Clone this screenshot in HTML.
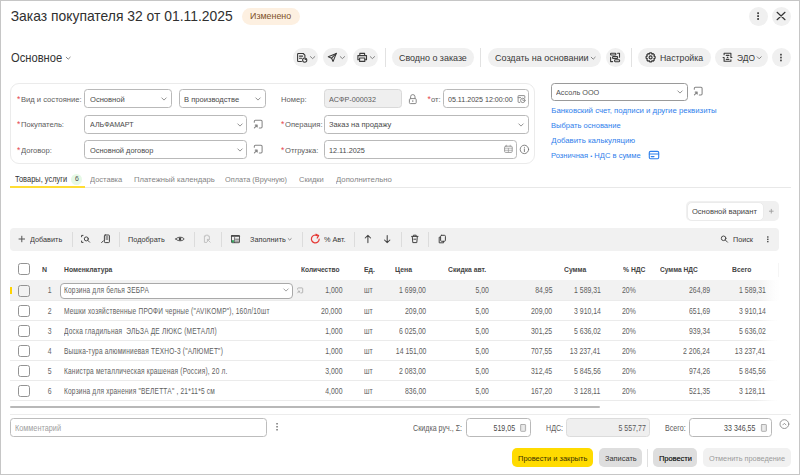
<!DOCTYPE html>
<html><head><meta charset="utf-8"><style>
html,body{margin:0;padding:0;width:800px;height:475px;overflow:hidden;background:#fff;}
body{position:relative;font-family:"Liberation Sans",sans-serif;}
.t{position:absolute;white-space:nowrap;line-height:20px;}
svg{overflow:visible;}
</style></head><body>
<div style="position:absolute;left:0px;top:0px;width:800px;height:475px;box-sizing:border-box;border:1px solid #c6c6c6;"></div>
<div class="t" style="left:10.7px;top:6px;font-size:13.9px;color:#303030;font-weight:400;">Заказ покупателя 32 от 01.11.2025</div>
<div style="position:absolute;left:242px;top:8px;width:58px;height:17px;box-sizing:border-box;background:#fdf0e1;border-radius:8.5px;"></div>
<div class="t" style="left:249.6px;top:6px;font-size:9.3px;color:#7d5128;font-weight:400;transform:scaleX(0.955);transform-origin:left center;">Изменено</div>
<div style="position:absolute;left:749px;top:7px;width:19px;height:19px;box-sizing:border-box;background:#f0f0f0;border-radius:10px;"></div>
<div style="position:absolute;left:772px;top:7px;width:19px;height:19px;box-sizing:border-box;background:#f0f0f0;border-radius:10px;"></div>
<svg style="position:absolute;left:749px;top:6px" width="18" height="20" viewBox="749 6 18 20" fill="none" stroke="#444" stroke-width="1" stroke-linecap="round" stroke-linejoin="round"><rect x="757.2" y="12.3" width="1.8" height="1.8" fill="#444" stroke="none"/><rect x="757.2" y="15.2" width="1.8" height="1.8" fill="#444" stroke="none"/><rect x="757.2" y="18.1" width="1.8" height="1.8" fill="#444" stroke="none"/></svg>
<svg style="position:absolute;left:771px;top:6px" width="20" height="20" viewBox="771 6 20 20" fill="none" stroke="#333" stroke-width="1.2" stroke-linecap="round" stroke-linejoin="round"><path d="M777.1 12.3L785 19.7M785 12.3L777.1 19.7"/></svg>
<div class="t" style="left:10.8px;top:48px;font-size:12.0px;color:#333;font-weight:400;transform:scaleX(0.93);transform-origin:left center;">Основное</div>
<svg style="position:absolute;left:64px;top:54px" width="10" height="8" viewBox="64 54 10 8" fill="none" stroke="#777" stroke-width="0.9" stroke-linecap="round" stroke-linejoin="round"><path d="M66.2 57.2L68.2 59.2L70.2 57.2"/></svg>
<div style="position:absolute;left:293px;top:48px;width:25px;height:19px;box-sizing:border-box;background:#f0f0f0;border-radius:10px;"></div>
<div style="position:absolute;left:323px;top:48px;width:25px;height:19px;box-sizing:border-box;background:#f0f0f0;border-radius:10px;"></div>
<div style="position:absolute;left:353px;top:48px;width:25px;height:19px;box-sizing:border-box;background:#f0f0f0;border-radius:10px;"></div>
<div style="position:absolute;left:385px;top:48px;width:1px;height:19px;box-sizing:border-box;background:#e2e2e2;"></div>
<div style="position:absolute;left:392px;top:48px;width:82px;height:19px;box-sizing:border-box;background:#f0f0f0;border-radius:10px;"></div>
<div class="t" style="left:398.7px;top:48px;font-size:9.6px;color:#383838;font-weight:400;transform:scaleX(0.93);transform-origin:left center;">Сводно о заказе</div>
<div style="position:absolute;left:480px;top:48px;width:1px;height:19px;box-sizing:border-box;background:#e2e2e2;"></div>
<div style="position:absolute;left:488px;top:48px;width:113px;height:19px;box-sizing:border-box;background:#f0f0f0;border-radius:10px;"></div>
<div class="t" style="left:494.6px;top:48px;font-size:9.6px;color:#383838;font-weight:400;transform:scaleX(0.94);transform-origin:left center;">Создать на основании</div>
<svg style="position:absolute;left:588px;top:54px" width="10" height="8" viewBox="588 54 10 8" fill="none" stroke="#777" stroke-width="0.9" stroke-linecap="round" stroke-linejoin="round"><path d="M591.2 57.2L593.2 59.2L595.2 57.2"/></svg>
<div style="position:absolute;left:606px;top:48px;width:19px;height:19px;box-sizing:border-box;background:#f0f0f0;border-radius:10px;"></div>
<div style="position:absolute;left:631px;top:48px;width:1px;height:19px;box-sizing:border-box;background:#e2e2e2;"></div>
<div style="position:absolute;left:638px;top:48px;width:73px;height:19px;box-sizing:border-box;background:#f0f0f0;border-radius:10px;"></div>
<div class="t" style="left:659.8px;top:48px;font-size:9.5px;color:#383838;font-weight:400;transform:scaleX(0.92);transform-origin:left center;">Настройка</div>
<div style="position:absolute;left:715px;top:48px;width:53px;height:19px;box-sizing:border-box;background:#f0f0f0;border-radius:10px;"></div>
<div class="t" style="left:736.5px;top:48px;font-size:9.3px;color:#383838;font-weight:400;transform:scaleX(0.9);transform-origin:left center;">ЭДО</div>
<svg style="position:absolute;left:754px;top:54px" width="10" height="8" viewBox="754 54 10 8" fill="none" stroke="#777" stroke-width="0.9" stroke-linecap="round" stroke-linejoin="round"><path d="M757.2 56.8L759.2 58.8L761.2 56.8"/></svg>
<div style="position:absolute;left:772px;top:48px;width:19px;height:19px;box-sizing:border-box;background:#f0f0f0;border-radius:10px;"></div>
<svg style="position:absolute;left:772px;top:48px" width="18" height="18" viewBox="772 48 18 18" fill="none" stroke="#444" stroke-width="1" stroke-linecap="round" stroke-linejoin="round"><rect x="780.1" y="53.8" width="1.7" height="1.7" fill="#444" stroke="none"/><rect x="780.1" y="56.7" width="1.7" height="1.7" fill="#444" stroke="none"/><rect x="780.1" y="59.6" width="1.7" height="1.7" fill="#444" stroke="none"/></svg>
<svg style="position:absolute;left:293px;top:48px" width="25" height="18" viewBox="293 48 25 18" fill="none" stroke="#3a3a3a" stroke-width="1.1" stroke-linecap="round" stroke-linejoin="round"><path d="M303.2 53.5H298.3Q297.6 53.5 297.6 54.2V60.8Q297.6 61.5 298.3 61.5H301.4"/><path d="M303.2 53.5L304.9 55.2V57.3"/><path d="M299.5 56.1H302.6M299.5 58.3H301.6"/><circle cx="304.7" cy="60.1" r="2.1"/><path d="M304.7 60.1V58.6A1.5 1.5 0 0 1 306.2 60.1Z" fill="#3a3a3a" stroke="none"/><path d="M310.4 56.6L312.6 58.6L314.8 56.6" stroke="#777" stroke-width="0.9"/></svg>
<svg style="position:absolute;left:323px;top:48px" width="25" height="18" viewBox="323 48 25 18" fill="none" stroke="#3a3a3a" stroke-width="1.1" stroke-linecap="round" stroke-linejoin="round"><path d="M328.3 56.7L336.3 53.4L333.1 61.4L331.6 58.2Z"/><path d="M331.6 58.2L336.3 53.4"/><path d="M340.2 56.6L342.4 58.6L344.6 56.6" stroke="#777" stroke-width="0.9"/></svg>
<svg style="position:absolute;left:353px;top:48px" width="25" height="18" viewBox="353 48 25 18" fill="none" stroke="#3a3a3a" stroke-width="1.1" stroke-linecap="round" stroke-linejoin="round"><path d="M359.8 55.5V53.4H364.6V55.5"/><path d="M359.5 59.8H357.9V55.6H366.5V59.8H364.9"/><rect x="359.6" y="58" width="5.2" height="3.4"/><path d="M370.2 56.6L372.4 58.6L374.6 56.6" stroke="#777" stroke-width="0.9"/></svg>
<svg style="position:absolute;left:606px;top:48px" width="19" height="18" viewBox="606 48 19 18" fill="none" stroke="#3a3a3a" stroke-width="1.1" stroke-linecap="round" stroke-linejoin="round"><path d="M610.6 57.4V61.6H612.6"/><path d="M617.6 53.3H619.5V57.2"/><rect x="610.6" y="53.2" width="5.2" height="1.8" rx="0.6"/><rect x="612.6" y="56.6" width="5" height="1.9" rx="0.6"/><rect x="614.6" y="59.8" width="5" height="1.9" rx="0.6"/></svg>
<svg style="position:absolute;left:640px;top:48px" width="20" height="18" viewBox="640 48 20 18" fill="none" stroke="#333" stroke-width="1.15" stroke-linecap="round" stroke-linejoin="round"><path d="M653.97 56.13L655.11 56.49L655.11 58.31L653.97 58.67L653.88 58.89L654.43 59.94L653.14 61.23L652.09 60.68L651.87 60.77L651.51 61.91L649.69 61.91L649.33 60.77L649.11 60.68L648.06 61.23L646.77 59.94L647.32 58.89L647.23 58.67L646.09 58.31L646.09 56.49L647.23 56.13L647.32 55.91L646.77 54.86L648.06 53.57L649.11 54.12L649.33 54.03L649.69 52.89L651.51 52.89L651.87 54.03L652.09 54.12L653.14 53.57L654.43 54.86L653.88 55.91Z"/><circle cx="650.6" cy="57.4" r="1.5"/></svg>
<svg style="position:absolute;left:718px;top:48px" width="18" height="18" viewBox="718 48 18 18" fill="none" stroke="#3a3a3a" stroke-width="1.1" stroke-linecap="round" stroke-linejoin="round"><path d="M724.1 54.8V53.3H730.9V57.5H731.9"/><path d="M723.1 57.5H724.1V61.3H730.9V59.8"/><path d="M726.3 55.4H728.9M727.3 57.4H727.9M726.3 59.4H728.9"/></svg>
<div style="position:absolute;left:10px;top:83px;width:525px;height:81px;box-sizing:border-box;border:1px solid #ebebeb;border-radius:9px;"></div>
<div class="t" style="left:17.0px;top:89px;font-size:8.6px;color:#e5484d;font-weight:400;">*</div>
<div class="t" style="left:20.6px;top:90px;font-size:8.0px;color:#5c5c5c;font-weight:400;transform:scaleX(0.95);transform-origin:left center;">Вид и состояние:</div>
<div style="position:absolute;left:84px;top:89px;width:88px;height:19px;box-sizing:border-box;background:#fff;border:1px solid #b9b9b9;border-radius:3.5px;"></div>
<div class="t" style="left:89.5px;top:90px;font-size:7.9px;color:#4a4a4a;font-weight:400;transform:scaleX(0.96);transform-origin:left center;">Основной</div>
<svg style="position:absolute;left:159.8px;top:94.5px" width="8" height="8" viewBox="159.8 94.5 8 8" fill="none" stroke="#888" stroke-width="0.9" stroke-linecap="round" stroke-linejoin="round"><path d="M161.60000000000002 97.4L163.8 99.6L166.0 97.4"/></svg>
<div style="position:absolute;left:179px;top:89px;width:87px;height:19px;box-sizing:border-box;background:#fff;border:1px solid #b9b9b9;border-radius:3.5px;"></div>
<div class="t" style="left:183.8px;top:90px;font-size:7.9px;color:#4a4a4a;font-weight:400;transform:scaleX(0.96);transform-origin:left center;">В производстве</div>
<svg style="position:absolute;left:253.5px;top:94.5px" width="8" height="8" viewBox="253.5 94.5 8 8" fill="none" stroke="#888" stroke-width="0.9" stroke-linecap="round" stroke-linejoin="round"><path d="M255.3 97.4L257.5 99.6L259.7 97.4"/></svg>
<div class="t" style="left:280.9px;top:90px;font-size:8.0px;color:#5c5c5c;font-weight:400;transform:scaleX(0.95);transform-origin:left center;">Номер:</div>
<div style="position:absolute;left:324px;top:89px;width:78px;height:19px;box-sizing:border-box;background:#efefef;border:1px solid #d9d9d9;border-radius:3.5px;"></div>
<div class="t" style="left:329.2px;top:90px;font-size:7.9px;color:#5c5c5c;font-weight:400;transform:scaleX(0.92);transform-origin:left center;">АСФР-000032</div>
<svg style="position:absolute;left:405px;top:89px" width="15" height="18" viewBox="405 89 15 18" fill="none" stroke="#888" stroke-width="1.0" stroke-linecap="round" stroke-linejoin="round"><rect x="409.4" y="98.6" width="6.8" height="5" rx="1"/><path d="M410.6 98.6V96.8A2.2 2.2 0 0 1 415 96.8V98.6"/><path d="M412.8 100.6V101.6"/></svg>
<div class="t" style="left:427.4px;top:89px;font-size:8.6px;color:#e5484d;font-weight:400;">*</div>
<div class="t" style="left:431.0px;top:90px;font-size:8.0px;color:#5c5c5c;font-weight:400;transform:scaleX(0.95);transform-origin:left center;">от:</div>
<div style="position:absolute;left:443px;top:89px;width:86px;height:19px;box-sizing:border-box;background:#fff;border:1px solid #b9b9b9;border-radius:3.5px;"></div>
<div class="t" style="left:447.8px;top:90px;font-size:7.9px;color:#4a4a4a;font-weight:400;transform:scaleX(0.9);transform-origin:left center;">05.11.2025 12:00:00</div>
<svg style="position:absolute;left:515px;top:91px" width="13" height="15" viewBox="515 91 13 15" fill="none" stroke="#8a8a8a" stroke-width="0.95" stroke-linecap="round" stroke-linejoin="round"><path d="M524.8 98V96.1Q524.8 95.6 524.3 95.6H518.6Q518.1 95.6 518.1 96.1V101.9Q518.1 102.4 518.6 102.4H519.8"/><path d="M518.1 97.6H520.6"/><circle cx="522.8" cy="100.4" r="2.2"/><path d="M522.8 99.4V100.5H523.6" stroke-width="0.7"/></svg>
<div class="t" style="left:17.0px;top:114px;font-size:8.6px;color:#e5484d;font-weight:400;">*</div>
<div class="t" style="left:20.6px;top:115px;font-size:8.0px;color:#5c5c5c;font-weight:400;transform:scaleX(0.95);transform-origin:left center;">Покупатель:</div>
<div style="position:absolute;left:84px;top:115px;width:163px;height:19px;box-sizing:border-box;background:#fff;border:1px solid #b9b9b9;border-radius:3.5px;"></div>
<div class="t" style="left:89.5px;top:115px;font-size:7.9px;color:#4a4a4a;font-weight:400;transform:scaleX(0.9);transform-origin:left center;">АЛЬФАМАРТ</div>
<svg style="position:absolute;left:235.5px;top:121.0px" width="8" height="8" viewBox="235.5 121.0 8 8" fill="none" stroke="#888" stroke-width="0.9" stroke-linecap="round" stroke-linejoin="round"><path d="M237.3 123.9L239.5 126.1L241.7 123.9"/></svg>
<svg style="position:absolute;left:252.3px;top:118.4px" width="13" height="13" viewBox="252.3 118.4 13 13" fill="none" stroke="#858585" stroke-width="1.05" stroke-linecap="round" stroke-linejoin="round"><path d="M254.60000000000002 122.60000000000001V121.80000000000001Q254.60000000000002 120.7 255.70000000000002 120.7H261.3Q262.40000000000003 120.7 262.40000000000003 121.80000000000001V127.2Q262.40000000000003 128.3 261.3 128.3H259.6"/><path d="M254.70000000000002 128.3L257.5 125.5M255.5 125.5H257.5V127.5"/></svg>
<div class="t" style="left:280.9px;top:114px;font-size:8.6px;color:#e5484d;font-weight:400;">*</div>
<div class="t" style="left:284.5px;top:115px;font-size:8.0px;color:#5c5c5c;font-weight:400;transform:scaleX(0.95);transform-origin:left center;">Операция:</div>
<div style="position:absolute;left:324px;top:115px;width:205px;height:19px;box-sizing:border-box;background:#fff;border:1px solid #b9b9b9;border-radius:3.5px;"></div>
<div class="t" style="left:329.2px;top:115px;font-size:7.9px;color:#4a4a4a;font-weight:400;transform:scaleX(0.96);transform-origin:left center;">Заказ на продажу</div>
<svg style="position:absolute;left:517.2px;top:121.0px" width="8" height="8" viewBox="517.2 121.0 8 8" fill="none" stroke="#888" stroke-width="0.9" stroke-linecap="round" stroke-linejoin="round"><path d="M519.0 123.9L521.2 126.1L523.4000000000001 123.9"/></svg>
<div class="t" style="left:17.0px;top:140px;font-size:8.6px;color:#e5484d;font-weight:400;">*</div>
<div class="t" style="left:20.6px;top:141px;font-size:8.0px;color:#5c5c5c;font-weight:400;transform:scaleX(0.95);transform-origin:left center;">Договор:</div>
<div style="position:absolute;left:84px;top:140px;width:163px;height:19px;box-sizing:border-box;background:#fff;border:1px solid #b9b9b9;border-radius:3.5px;"></div>
<div class="t" style="left:89.5px;top:141px;font-size:7.9px;color:#4a4a4a;font-weight:400;transform:scaleX(0.94);transform-origin:left center;">Основной договор</div>
<svg style="position:absolute;left:235.5px;top:146.0px" width="8" height="8" viewBox="235.5 146.0 8 8" fill="none" stroke="#888" stroke-width="0.9" stroke-linecap="round" stroke-linejoin="round"><path d="M237.3 148.9L239.5 151.1L241.7 148.9"/></svg>
<svg style="position:absolute;left:252.3px;top:143.4px" width="13" height="13" viewBox="252.3 143.4 13 13" fill="none" stroke="#858585" stroke-width="1.05" stroke-linecap="round" stroke-linejoin="round"><path d="M254.60000000000002 147.6V146.8Q254.60000000000002 145.70000000000002 255.70000000000002 145.70000000000002H261.3Q262.40000000000003 145.70000000000002 262.40000000000003 146.8V152.20000000000002Q262.40000000000003 153.3 261.3 153.3H259.6"/><path d="M254.70000000000002 153.3L257.5 150.5M255.5 150.5H257.5V152.5"/></svg>
<div class="t" style="left:280.9px;top:140px;font-size:8.6px;color:#e5484d;font-weight:400;">*</div>
<div class="t" style="left:284.5px;top:141px;font-size:8.0px;color:#5c5c5c;font-weight:400;transform:scaleX(0.95);transform-origin:left center;">Отгрузка:</div>
<div style="position:absolute;left:324px;top:140px;width:193px;height:19px;box-sizing:border-box;background:#fff;border:1px solid #b9b9b9;border-radius:3.5px;"></div>
<div class="t" style="left:329.2px;top:141px;font-size:7.9px;color:#4a4a4a;font-weight:400;transform:scaleX(0.92);transform-origin:left center;">12.11.2025</div>
<svg style="position:absolute;left:502px;top:143px" width="14" height="14" viewBox="502 143 14 14" fill="none" stroke="#999" stroke-width="0.95" stroke-linecap="round" stroke-linejoin="round"><rect x="504.6" y="146.2" width="7.6" height="6.2" rx="1"/><path d="M504.6 148.2H512.2M506.6 145.2V146.4M510.2 145.2V146.4M504.8 150.3H512M508.4 148.4V152.2" stroke-width="0.7"/></svg>
<svg style="position:absolute;left:518px;top:143px" width="13" height="14" viewBox="518 143 13 14" fill="none" stroke="#777" stroke-width="0.9" stroke-linecap="round" stroke-linejoin="round"><circle cx="524.4" cy="149.4" r="4.2"/><path d="M524.4 148.9V151.6"/><circle cx="524.4" cy="147.3" r="0.55" fill="#777" stroke="none"/></svg>
<div style="position:absolute;left:551px;top:83px;width:137px;height:18px;box-sizing:border-box;background:#fff;border:1px solid #9a9a9a;border-radius:3.5px;"></div>
<div class="t" style="left:556px;top:83px;font-size:7.6px;color:#505050;font-weight:400;transform:scaleX(0.96);transform-origin:left center;">Ассоль ООО</div>
<svg style="position:absolute;left:675.8px;top:87.5px" width="8" height="8" viewBox="675.8 87.5 8 8" fill="none" stroke="#888" stroke-width="0.9" stroke-linecap="round" stroke-linejoin="round"><path d="M677.5999999999999 90.4L679.8 92.6L682.0 90.4"/></svg>
<svg style="position:absolute;left:692.3px;top:85.4px" width="13" height="13" viewBox="692.3 85.4 13 13" fill="none" stroke="#858585" stroke-width="1.05" stroke-linecap="round" stroke-linejoin="round"><path d="M694.5999999999999 89.60000000000001V88.80000000000001Q694.5999999999999 87.7 695.6999999999999 87.7H701.3Q702.4 87.7 702.4 88.80000000000001V94.2Q702.4 95.30000000000001 701.3 95.30000000000001H699.5999999999999"/><path d="M694.6999999999999 95.30000000000001L697.5 92.5M695.5 92.5H697.5V94.5"/></svg>
<div class="t" style="left:551.3px;top:100.5px;font-size:7.8px;color:#2f80ec;font-weight:400;">Банковский счет, подписи и другие реквизиты</div>
<div class="t" style="left:551.3px;top:115.5px;font-size:7.8px;color:#2f80ec;font-weight:400;transform:scaleX(0.97);transform-origin:left center;">Выбрать основание</div>
<div class="t" style="left:551.3px;top:130.5px;font-size:7.8px;color:#2f80ec;font-weight:400;">Добавить калькуляцию</div>
<div class="t" style="left:551.3px;top:146px;font-size:7.8px;color:#2f80ec;font-weight:400;transform:scaleX(0.97);transform-origin:left center;">Розничная <span style="font-size:6px;position:relative;top:-0.5px">•</span> НДС в сумме</div>
<svg style="position:absolute;left:646px;top:149px" width="16" height="12" viewBox="646 149 16 12" fill="none" stroke="#2f80ec" stroke-width="1.1" stroke-linecap="round" stroke-linejoin="round"><rect x="649.3" y="151.4" width="9.4" height="7.4" rx="1.2"/><path d="M649.3 154H658.7M651.2 156.6H654"/></svg>
<div style="position:absolute;left:10px;top:187px;width:781px;height:1px;box-sizing:border-box;background:#e8e8e8;"></div>
<div style="position:absolute;left:10px;top:186px;width:75px;height:2px;box-sizing:border-box;background:#ffdd33;"></div>
<div class="t" style="left:15.3px;top:170px;font-size:8.2px;color:#333;font-weight:400;transform:scaleX(0.91);transform-origin:left center;">Товары, услуги</div>
<div style="position:absolute;left:70.9px;top:173.8px;width:11px;height:11px;background:#e6f9e6;border-radius:5.5px;"></div>
<div class="t" style="left:75.0px;top:169px;font-size:6.9px;color:#505050;font-weight:400;">6</div>
<div class="t" style="left:89.9px;top:170px;font-size:8.0px;color:#858585;font-weight:400;transform:scaleX(0.9384);transform-origin:left center;">Доставка</div>
<div class="t" style="left:133.6px;top:170px;font-size:8.0px;color:#858585;font-weight:400;transform:scaleX(0.9588);transform-origin:left center;">Платежный календарь</div>
<div class="t" style="left:225.3px;top:170px;font-size:8.0px;color:#858585;font-weight:400;transform:scaleX(0.918);transform-origin:left center;">Оплата (Вручную)</div>
<div class="t" style="left:298.8px;top:170px;font-size:8.0px;color:#858585;font-weight:400;transform:scaleX(0.9384);transform-origin:left center;">Скидки</div>
<div class="t" style="left:335.8px;top:170px;font-size:8.0px;color:#858585;font-weight:400;transform:scaleX(0.969);transform-origin:left center;">Дополнительно</div>
<div style="position:absolute;left:686px;top:201px;width:93px;height:20px;box-sizing:border-box;background:#f0f0f0;border-radius:5px;"></div>
<div style="position:absolute;left:687px;top:202px;width:77px;height:19px;box-sizing:border-box;background:#fff;border:1px solid #ebebeb;border-radius:5px;"></div>
<div class="t" style="left:691.9px;top:202px;font-size:8.0px;color:#444;font-weight:400;transform:scaleX(0.94);transform-origin:left center;">Основной вариант</div>
<svg style="position:absolute;left:767px;top:206px" width="10" height="10" viewBox="767 206 10 10" fill="none" stroke="#999" stroke-width="0.85" stroke-linecap="round" stroke-linejoin="round"><path d="M771.3 209.3V213.1M769.4 211.2H773.2"/></svg>
<div style="position:absolute;left:10px;top:228px;width:769px;height:23px;box-sizing:border-box;background:#f1f1f1;border-radius:4px;"></div>
<svg style="position:absolute;left:14px;top:232px" width="14" height="14" viewBox="14 232 14 14" fill="none" stroke="#555" stroke-width="1.0" stroke-linecap="round" stroke-linejoin="round"><path d="M21.8 236.2V241.8M19 239H24.6"/></svg>
<div class="t" style="left:30px;top:230px;font-size:8.1px;color:#383838;font-weight:400;transform:scaleX(0.9);transform-origin:left center;">Добавить</div>
<div style="position:absolute;left:72px;top:232px;width:1px;height:15px;box-sizing:border-box;background:#dcdcdc;"></div>
<div style="position:absolute;left:119px;top:232px;width:1px;height:15px;box-sizing:border-box;background:#dcdcdc;"></div>
<div class="t" style="left:128px;top:230px;font-size:8.1px;color:#383838;font-weight:400;transform:scaleX(0.9);transform-origin:left center;">Подобрать</div>
<div style="position:absolute;left:194px;top:232px;width:1px;height:15px;box-sizing:border-box;background:#dcdcdc;"></div>
<div style="position:absolute;left:221px;top:232px;width:1px;height:15px;box-sizing:border-box;background:#dcdcdc;"></div>
<div class="t" style="left:250px;top:230px;font-size:8.1px;color:#383838;font-weight:400;transform:scaleX(0.9);transform-origin:left center;">Заполнить</div>
<svg style="position:absolute;left:284px;top:235px" width="10" height="8" viewBox="284 235 10 8" fill="none" stroke="#777" stroke-width="0.85" stroke-linecap="round" stroke-linejoin="round"><path d="M288.2 238.6L289.7 240L291.2 238.6"/></svg>
<div style="position:absolute;left:302px;top:232px;width:1px;height:15px;box-sizing:border-box;background:#dcdcdc;"></div>
<div class="t" style="left:323.8px;top:230px;font-size:8.1px;color:#383838;font-weight:400;transform:scaleX(0.9);transform-origin:left center;">% Авт.</div>
<div style="position:absolute;left:354px;top:232px;width:1px;height:15px;box-sizing:border-box;background:#dcdcdc;"></div>
<div style="position:absolute;left:401px;top:232px;width:1px;height:15px;box-sizing:border-box;background:#dcdcdc;"></div>
<div style="position:absolute;left:428px;top:232px;width:1px;height:15px;box-sizing:border-box;background:#dcdcdc;"></div>
<div class="t" style="left:732.7px;top:230px;font-size:8.0px;color:#383838;font-weight:400;transform:scaleX(0.9);transform-origin:left center;">Поиск</div>
<svg style="position:absolute;left:762px;top:232px" width="12" height="14" viewBox="762 232 12 14" fill="none" stroke="#444" stroke-width="1" stroke-linecap="round" stroke-linejoin="round"><rect x="767.1" y="236.3" width="1.4" height="1.4" fill="#444" stroke="none"/><rect x="767.1" y="238.6" width="1.4" height="1.4" fill="#444" stroke="none"/><rect x="767.1" y="240.9" width="1.4" height="1.4" fill="#444" stroke="none"/></svg>
<svg style="position:absolute;left:78px;top:232px" width="14" height="14" viewBox="78 232 14 14" fill="none" stroke="#444" stroke-width="1.0" stroke-linecap="round" stroke-linejoin="round"><path d="M81.6 236.8V235.4H83M81.6 241V242.4H83"/><circle cx="86.3" cy="238.9" r="2"/><path d="M87.8 240.4L89.6 242.2"/></svg>
<svg style="position:absolute;left:98px;top:232px" width="14" height="14" viewBox="98 232 14 14" fill="none" stroke="#444" stroke-width="1.0" stroke-linecap="round" stroke-linejoin="round"><rect x="104.4" y="235" width="5" height="7.6" rx="0.8"/><path d="M106 237H107.8M106 239H107.8"/><path d="M101.6 242.6L103.4 240.8"/></svg>
<svg style="position:absolute;left:173px;top:233px" width="14" height="12" viewBox="173 233 14 12" fill="none" stroke="#444" stroke-width="1.0" stroke-linecap="round" stroke-linejoin="round"><path d="M175.8 239C177.4 236.6 182.6 236.6 184.2 239C182.6 241.4 177.4 241.4 175.8 239Z"/><circle cx="180" cy="239" r="1.3" fill="#444" stroke="none"/></svg>
<svg style="position:absolute;left:200px;top:232px" width="14" height="14" viewBox="200 232 14 14" fill="none" stroke="#c2c2c2" stroke-width="1.0" stroke-linecap="round" stroke-linejoin="round"><path d="M204.4 236.2V242.4H206.6M204.4 236.2H205.6V235.2H208.2V236.2H209.4V238.6"/><path d="M207.4 239.4L210.2 242.2M207.4 239.4V241.6M207.4 239.4H209.6"/></svg>
<svg style="position:absolute;left:229px;top:232px" width="13" height="14" viewBox="229 232 13 14" fill="none" stroke="#444" stroke-width="1.0" stroke-linecap="round" stroke-linejoin="round"><rect x="231.5" y="235.5" width="8" height="7.2" rx="0.5" stroke-width="0.9"/><path d="M231.5 236.2H239.5" stroke-width="1.3"/><path d="M234.6 237.6V242.6M235.6 239.2H238.6M235.6 241.1H238.6" stroke-width="0.75"/><rect x="231.9" y="240.2" width="2" height="2.2" fill="#2fa35a" stroke="none"/></svg>
<svg style="position:absolute;left:309px;top:232px" width="13" height="14" viewBox="309 232 13 14" fill="none" stroke="#e53935" stroke-width="1.2" stroke-linecap="round" stroke-linejoin="round"><path d="M319.2 239A3.9 3.9 0 1 1 317.4 235.7"/><path d="M316 234.2L318.6 235.6L317.2 238"/></svg>
<svg style="position:absolute;left:362px;top:232px" width="12" height="14" viewBox="362 232 12 14" fill="none" stroke="#444" stroke-width="1.05" stroke-linecap="round" stroke-linejoin="round"><path d="M367.9 242.6V235.4M365.2 238L367.9 235.3L370.6 238"/></svg>
<svg style="position:absolute;left:381px;top:232px" width="12" height="14" viewBox="381 232 12 14" fill="none" stroke="#444" stroke-width="1.05" stroke-linecap="round" stroke-linejoin="round"><path d="M387.2 235.4V242.6M384.5 240L387.2 242.7L389.9 240"/></svg>
<svg style="position:absolute;left:408px;top:232px" width="13" height="14" viewBox="408 232 13 14" fill="none" stroke="#444" stroke-width="1.0" stroke-linecap="round" stroke-linejoin="round"><path d="M411.6 236.4H418M413.4 236.4V235.2H416.2V236.4M412.3 236.8L412.8 242.6H416.8L417.3 236.8"/><path d="M413.8 239.2H415.8"/></svg>
<svg style="position:absolute;left:435px;top:232px" width="14" height="14" viewBox="435 232 14 14" fill="none" stroke="#444" stroke-width="1.0" stroke-linecap="round" stroke-linejoin="round"><rect x="440.6" y="235.3" width="4.8" height="6" rx="1"/><path d="M440.6 237.2H439.2V242.8H443.6V241.3"/></svg>
<svg style="position:absolute;left:717px;top:232px" width="14" height="14" viewBox="717 232 14 14" fill="none" stroke="#444" stroke-width="0.95" stroke-linecap="round" stroke-linejoin="round"><circle cx="723.6" cy="238.3" r="2.3"/><path d="M725.3 240L727.5 242.2"/></svg>
<div style="position:absolute;left:18px;top:263px;width:12px;height:12px;box-sizing:border-box;border:1.4px solid #939393;border-radius:2.6px;background:#fff;"></div>
<div class="t" style="left:42px;top:260px;font-size:7.7px;color:#444;font-weight:700;transform:scaleX(0.9);transform-origin:left center;">N</div>
<div class="t" style="left:64px;top:260px;font-size:7.7px;color:#444;font-weight:700;transform:scaleX(0.88);transform-origin:left center;">Номенклатура</div>
<div class="t" style="left:300.75px;top:260px;font-size:7.7px;color:#444;font-weight:700;transform:scaleX(0.86);transform-origin:left center;">Количество</div>
<div class="t" style="left:363.75px;top:260px;font-size:7.7px;color:#444;font-weight:700;transform:scaleX(0.9);transform-origin:left center;">Ед.</div>
<div class="t" style="left:395px;top:260px;font-size:7.7px;color:#444;font-weight:700;transform:scaleX(0.9);transform-origin:left center;">Цена</div>
<div class="t" style="left:447.5px;top:260px;font-size:7.7px;color:#444;font-weight:700;transform:scaleX(0.88);transform-origin:left center;">Скидка авт.</div>
<div class="t" style="left:563.75px;top:260px;font-size:7.7px;color:#444;font-weight:700;transform:scaleX(0.88);transform-origin:left center;">Сумма</div>
<div class="t" style="left:622.5px;top:260px;font-size:7.7px;color:#444;font-weight:700;transform:scaleX(0.88);transform-origin:left center;">% НДС</div>
<div class="t" style="left:660px;top:260px;font-size:7.7px;color:#444;font-weight:700;transform:scaleX(0.86);transform-origin:left center;">Сумма НДС</div>
<div class="t" style="left:731.75px;top:260px;font-size:7.7px;color:#444;font-weight:700;transform:scaleX(0.88);transform-origin:left center;">Всего</div>
<div style="position:absolute;left:10px;top:280px;width:770px;height:20px;box-sizing:border-box;background:linear-gradient(90deg,#f2f2f2 0,#f2f2f2 745px,rgba(242,242,242,0) 770px);"></div>
<div style="position:absolute;left:10px;top:287px;width:2px;height:7px;box-sizing:border-box;background:#ffd400;"></div>
<div style="position:absolute;left:10px;top:300px;width:769px;height:1px;box-sizing:border-box;background:linear-gradient(90deg,#ebebeb 0,#ebebeb 745px,rgba(235,235,235,0) 768px);"></div>
<div style="position:absolute;left:18px;top:285px;width:12px;height:12px;box-sizing:border-box;border:1.4px solid #939393;border-radius:2.6px;background:transparent;"></div>
<div class="t" style="right:748.2px;top:281px;font-size:8.2px;color:#666;font-weight:400;transform:scaleX(0.84);transform-origin:right center;">1</div>
<div style="position:absolute;left:60px;top:283px;width:233px;height:16px;box-sizing:border-box;background:#fff;border:1px solid #a9a9a9;border-radius:4px;"></div>
<svg style="position:absolute;left:282.3px;top:285.8px" width="8" height="8" viewBox="282.3 285.8 8 8" fill="none" stroke="#999" stroke-width="0.9" stroke-linecap="round" stroke-linejoin="round"><path d="M284.1 288.7L286.3 290.90000000000003L288.5 288.7"/></svg>
<svg style="position:absolute;left:294px;top:285px" width="12" height="11" viewBox="294 285 12 11" fill="none" stroke="#aaa" stroke-width="0.85" stroke-linecap="round" stroke-linejoin="round"><path d="M297.6 289.2V288.6Q297.6 287.9 298.3 287.9H302Q302.7 287.9 302.7 288.6V292.2Q302.7 292.9 302 292.9H300.8"/><path d="M297.6 292.9L299.4 291.1M298.2 291.1H299.4V292.3"/></svg>
<div class="t" style="left:64px;top:281px;font-size:8.2px;color:#5e5e5e;font-weight:400;transform:scaleX(0.8);transform-origin:left center;letter-spacing:0.25px;">Корзина для белья ЗЕБРА</div>
<div class="t" style="right:457.5px;top:281px;font-size:8.2px;color:#5e5e5e;font-weight:400;transform:scaleX(0.84);transform-origin:right center;">1,000</div>
<div class="t" style="left:363.75px;top:281px;font-size:8.2px;color:#5e5e5e;font-weight:400;transform:scaleX(0.84);transform-origin:left center;">шт</div>
<div class="t" style="right:373.75px;top:281px;font-size:8.2px;color:#5e5e5e;font-weight:400;transform:scaleX(0.84);transform-origin:right center;">1 699,00</div>
<div class="t" style="right:311.25px;top:281px;font-size:8.2px;color:#5e5e5e;font-weight:400;transform:scaleX(0.84);transform-origin:right center;">5,00</div>
<div class="t" style="right:248px;top:281px;font-size:8.2px;color:#5e5e5e;font-weight:400;transform:scaleX(0.84);transform-origin:right center;">84,95</div>
<div class="t" style="right:199.5px;top:281px;font-size:8.2px;color:#5e5e5e;font-weight:400;transform:scaleX(0.84);transform-origin:right center;">1 589,31</div>
<div class="t" style="left:622px;top:281px;font-size:8.2px;color:#5e5e5e;font-weight:400;transform:scaleX(0.84);transform-origin:left center;">20%</div>
<div class="t" style="right:90px;top:281px;font-size:8.2px;color:#5e5e5e;font-weight:400;transform:scaleX(0.84);transform-origin:right center;">264,89</div>
<div class="t" style="right:34.5px;top:281px;font-size:8.2px;color:#5e5e5e;font-weight:400;transform:scaleX(0.84);transform-origin:right center;">1 589,31</div>
<div style="position:absolute;left:10px;top:320px;width:769px;height:1px;box-sizing:border-box;background:linear-gradient(90deg,#ebebeb 0,#ebebeb 745px,rgba(235,235,235,0) 768px);"></div>
<div style="position:absolute;left:18px;top:305px;width:12px;height:12px;box-sizing:border-box;border:1.4px solid #939393;border-radius:2.6px;background:#fff;"></div>
<div class="t" style="right:748.2px;top:302px;font-size:8.2px;color:#666;font-weight:400;transform:scaleX(0.84);transform-origin:right center;">2</div>
<div class="t" style="left:64px;top:302px;font-size:8.2px;color:#5e5e5e;font-weight:400;transform:scaleX(0.8);transform-origin:left center;letter-spacing:0.25px;">Мешки хозяйственные ПРОФИ черные ("AVIKOMP"), 160л/10шт</div>
<div class="t" style="right:457.5px;top:302px;font-size:8.2px;color:#5e5e5e;font-weight:400;transform:scaleX(0.84);transform-origin:right center;">20,000</div>
<div class="t" style="left:363.75px;top:302px;font-size:8.2px;color:#5e5e5e;font-weight:400;transform:scaleX(0.84);transform-origin:left center;">шт</div>
<div class="t" style="right:373.75px;top:302px;font-size:8.2px;color:#5e5e5e;font-weight:400;transform:scaleX(0.84);transform-origin:right center;">209,00</div>
<div class="t" style="right:311.25px;top:302px;font-size:8.2px;color:#5e5e5e;font-weight:400;transform:scaleX(0.84);transform-origin:right center;">5,00</div>
<div class="t" style="right:248px;top:302px;font-size:8.2px;color:#5e5e5e;font-weight:400;transform:scaleX(0.84);transform-origin:right center;">209,00</div>
<div class="t" style="right:199.5px;top:302px;font-size:8.2px;color:#5e5e5e;font-weight:400;transform:scaleX(0.84);transform-origin:right center;">3 910,14</div>
<div class="t" style="left:622px;top:302px;font-size:8.2px;color:#5e5e5e;font-weight:400;transform:scaleX(0.84);transform-origin:left center;">20%</div>
<div class="t" style="right:90px;top:302px;font-size:8.2px;color:#5e5e5e;font-weight:400;transform:scaleX(0.84);transform-origin:right center;">651,69</div>
<div class="t" style="right:34.5px;top:302px;font-size:8.2px;color:#5e5e5e;font-weight:400;transform:scaleX(0.84);transform-origin:right center;">3 910,14</div>
<div style="position:absolute;left:10px;top:340px;width:769px;height:1px;box-sizing:border-box;background:linear-gradient(90deg,#ebebeb 0,#ebebeb 745px,rgba(235,235,235,0) 768px);"></div>
<div style="position:absolute;left:18px;top:325px;width:12px;height:12px;box-sizing:border-box;border:1.4px solid #939393;border-radius:2.6px;background:#fff;"></div>
<div class="t" style="right:748.2px;top:322px;font-size:8.2px;color:#666;font-weight:400;transform:scaleX(0.84);transform-origin:right center;">3</div>
<div class="t" style="left:64px;top:322px;font-size:8.2px;color:#5e5e5e;font-weight:400;transform:scaleX(0.8);transform-origin:left center;letter-spacing:0.25px;">Доска гладильная &nbsp;ЭЛЬЗА ДЕ ЛЮКС (МЕТАЛЛ)</div>
<div class="t" style="right:457.5px;top:322px;font-size:8.2px;color:#5e5e5e;font-weight:400;transform:scaleX(0.84);transform-origin:right center;">1,000</div>
<div class="t" style="left:363.75px;top:322px;font-size:8.2px;color:#5e5e5e;font-weight:400;transform:scaleX(0.84);transform-origin:left center;">шт</div>
<div class="t" style="right:373.75px;top:322px;font-size:8.2px;color:#5e5e5e;font-weight:400;transform:scaleX(0.84);transform-origin:right center;">6 025,00</div>
<div class="t" style="right:311.25px;top:322px;font-size:8.2px;color:#5e5e5e;font-weight:400;transform:scaleX(0.84);transform-origin:right center;">5,00</div>
<div class="t" style="right:248px;top:322px;font-size:8.2px;color:#5e5e5e;font-weight:400;transform:scaleX(0.84);transform-origin:right center;">301,25</div>
<div class="t" style="right:199.5px;top:322px;font-size:8.2px;color:#5e5e5e;font-weight:400;transform:scaleX(0.84);transform-origin:right center;">5 636,02</div>
<div class="t" style="left:622px;top:322px;font-size:8.2px;color:#5e5e5e;font-weight:400;transform:scaleX(0.84);transform-origin:left center;">20%</div>
<div class="t" style="right:90px;top:322px;font-size:8.2px;color:#5e5e5e;font-weight:400;transform:scaleX(0.84);transform-origin:right center;">939,34</div>
<div class="t" style="right:34.5px;top:322px;font-size:8.2px;color:#5e5e5e;font-weight:400;transform:scaleX(0.84);transform-origin:right center;">5 636,02</div>
<div style="position:absolute;left:10px;top:360px;width:769px;height:1px;box-sizing:border-box;background:linear-gradient(90deg,#ebebeb 0,#ebebeb 745px,rgba(235,235,235,0) 768px);"></div>
<div style="position:absolute;left:18px;top:345px;width:12px;height:12px;box-sizing:border-box;border:1.4px solid #939393;border-radius:2.6px;background:#fff;"></div>
<div class="t" style="right:748.2px;top:342px;font-size:8.2px;color:#666;font-weight:400;transform:scaleX(0.84);transform-origin:right center;">4</div>
<div class="t" style="left:64px;top:342px;font-size:8.2px;color:#5e5e5e;font-weight:400;transform:scaleX(0.8);transform-origin:left center;letter-spacing:0.25px;">Вышка-тура алюминиевая ТЕХНО-3 ("АЛЮМЕТ")</div>
<div class="t" style="right:457.5px;top:342px;font-size:8.2px;color:#5e5e5e;font-weight:400;transform:scaleX(0.84);transform-origin:right center;">1,000</div>
<div class="t" style="left:363.75px;top:342px;font-size:8.2px;color:#5e5e5e;font-weight:400;transform:scaleX(0.84);transform-origin:left center;">шт</div>
<div class="t" style="right:373.75px;top:342px;font-size:8.2px;color:#5e5e5e;font-weight:400;transform:scaleX(0.84);transform-origin:right center;">14 151,00</div>
<div class="t" style="right:311.25px;top:342px;font-size:8.2px;color:#5e5e5e;font-weight:400;transform:scaleX(0.84);transform-origin:right center;">5,00</div>
<div class="t" style="right:248px;top:342px;font-size:8.2px;color:#5e5e5e;font-weight:400;transform:scaleX(0.84);transform-origin:right center;">707,55</div>
<div class="t" style="right:199.5px;top:342px;font-size:8.2px;color:#5e5e5e;font-weight:400;transform:scaleX(0.84);transform-origin:right center;">13 237,41</div>
<div class="t" style="left:622px;top:342px;font-size:8.2px;color:#5e5e5e;font-weight:400;transform:scaleX(0.84);transform-origin:left center;">20%</div>
<div class="t" style="right:90px;top:342px;font-size:8.2px;color:#5e5e5e;font-weight:400;transform:scaleX(0.84);transform-origin:right center;">2 206,24</div>
<div class="t" style="right:34.5px;top:342px;font-size:8.2px;color:#5e5e5e;font-weight:400;transform:scaleX(0.84);transform-origin:right center;">13 237,41</div>
<div style="position:absolute;left:10px;top:380px;width:769px;height:1px;box-sizing:border-box;background:linear-gradient(90deg,#ebebeb 0,#ebebeb 745px,rgba(235,235,235,0) 768px);"></div>
<div style="position:absolute;left:18px;top:365px;width:12px;height:12px;box-sizing:border-box;border:1.4px solid #939393;border-radius:2.6px;background:#fff;"></div>
<div class="t" style="right:748.2px;top:362px;font-size:8.2px;color:#666;font-weight:400;transform:scaleX(0.84);transform-origin:right center;">5</div>
<div class="t" style="left:64px;top:362px;font-size:8.2px;color:#5e5e5e;font-weight:400;transform:scaleX(0.8);transform-origin:left center;letter-spacing:0.25px;">Канистра металлическая крашеная (Россия), 20 л.</div>
<div class="t" style="right:457.5px;top:362px;font-size:8.2px;color:#5e5e5e;font-weight:400;transform:scaleX(0.84);transform-origin:right center;">3,000</div>
<div class="t" style="left:363.75px;top:362px;font-size:8.2px;color:#5e5e5e;font-weight:400;transform:scaleX(0.84);transform-origin:left center;">шт</div>
<div class="t" style="right:373.75px;top:362px;font-size:8.2px;color:#5e5e5e;font-weight:400;transform:scaleX(0.84);transform-origin:right center;">2 083,00</div>
<div class="t" style="right:311.25px;top:362px;font-size:8.2px;color:#5e5e5e;font-weight:400;transform:scaleX(0.84);transform-origin:right center;">5,00</div>
<div class="t" style="right:248px;top:362px;font-size:8.2px;color:#5e5e5e;font-weight:400;transform:scaleX(0.84);transform-origin:right center;">312,45</div>
<div class="t" style="right:199.5px;top:362px;font-size:8.2px;color:#5e5e5e;font-weight:400;transform:scaleX(0.84);transform-origin:right center;">5 845,56</div>
<div class="t" style="left:622px;top:362px;font-size:8.2px;color:#5e5e5e;font-weight:400;transform:scaleX(0.84);transform-origin:left center;">20%</div>
<div class="t" style="right:90px;top:362px;font-size:8.2px;color:#5e5e5e;font-weight:400;transform:scaleX(0.84);transform-origin:right center;">974,26</div>
<div class="t" style="right:34.5px;top:362px;font-size:8.2px;color:#5e5e5e;font-weight:400;transform:scaleX(0.84);transform-origin:right center;">5 845,56</div>
<div style="position:absolute;left:10px;top:400px;width:769px;height:1px;box-sizing:border-box;background:linear-gradient(90deg,#ebebeb 0,#ebebeb 745px,rgba(235,235,235,0) 768px);"></div>
<div style="position:absolute;left:18px;top:385px;width:12px;height:12px;box-sizing:border-box;border:1.4px solid #939393;border-radius:2.6px;background:#fff;"></div>
<div class="t" style="right:748.2px;top:382px;font-size:8.2px;color:#666;font-weight:400;transform:scaleX(0.84);transform-origin:right center;">6</div>
<div class="t" style="left:64px;top:382px;font-size:8.2px;color:#5e5e5e;font-weight:400;transform:scaleX(0.8);transform-origin:left center;letter-spacing:0.25px;">Корзина для хранения "ВЕЛЕТТА" , 21*11*5 см</div>
<div class="t" style="right:457.5px;top:382px;font-size:8.2px;color:#5e5e5e;font-weight:400;transform:scaleX(0.84);transform-origin:right center;">4,000</div>
<div class="t" style="left:363.75px;top:382px;font-size:8.2px;color:#5e5e5e;font-weight:400;transform:scaleX(0.84);transform-origin:left center;">шт</div>
<div class="t" style="right:373.75px;top:382px;font-size:8.2px;color:#5e5e5e;font-weight:400;transform:scaleX(0.84);transform-origin:right center;">836,00</div>
<div class="t" style="right:311.25px;top:382px;font-size:8.2px;color:#5e5e5e;font-weight:400;transform:scaleX(0.84);transform-origin:right center;">5,00</div>
<div class="t" style="right:248px;top:382px;font-size:8.2px;color:#5e5e5e;font-weight:400;transform:scaleX(0.84);transform-origin:right center;">167,20</div>
<div class="t" style="right:199.5px;top:382px;font-size:8.2px;color:#5e5e5e;font-weight:400;transform:scaleX(0.84);transform-origin:right center;">3 128,11</div>
<div class="t" style="left:622px;top:382px;font-size:8.2px;color:#5e5e5e;font-weight:400;transform:scaleX(0.84);transform-origin:left center;">20%</div>
<div class="t" style="right:90px;top:382px;font-size:8.2px;color:#5e5e5e;font-weight:400;transform:scaleX(0.84);transform-origin:right center;">521,35</div>
<div class="t" style="right:34.5px;top:382px;font-size:8.2px;color:#5e5e5e;font-weight:400;transform:scaleX(0.84);transform-origin:right center;">3 128,11</div>
<div style="position:absolute;left:778px;top:263px;width:1px;height:14px;box-sizing:border-box;background:#efefef;"></div>
<div style="position:absolute;left:764px;top:258px;width:18px;height:143px;background:linear-gradient(90deg,rgba(255,255,255,0),rgba(255,255,255,0.5));"></div>
<div style="position:absolute;left:10px;top:406px;width:590px;height:2px;box-sizing:border-box;background:#b8b8b8;border-radius:1px;"></div>
<div style="position:absolute;left:10px;top:414px;width:781px;height:1px;box-sizing:border-box;background:#ececec;"></div>
<div style="position:absolute;left:10px;top:418px;width:257px;height:19px;box-sizing:border-box;background:#fff;border:1px solid #bdbdbd;border-radius:3.5px;"></div>
<div class="t" style="left:15px;top:418px;font-size:8.3px;color:#a0a0a0;font-weight:400;transform:scaleX(0.88);transform-origin:left center;">Комментарий</div>
<svg style="position:absolute;left:272px;top:420px" width="10" height="14" viewBox="272 420 10 14" fill="none" stroke="#444" stroke-width="1" stroke-linecap="round" stroke-linejoin="round"><rect x="276.3" y="423" width="1.5" height="1.5" fill="#777" stroke="none"/><rect x="276.3" y="426" width="1.5" height="1.5" fill="#777" stroke="none"/><rect x="276.3" y="429" width="1.5" height="1.5" fill="#777" stroke="none"/></svg>
<div class="t" style="left:412.5px;top:418px;font-size:8.4px;color:#5c5c5c;font-weight:400;transform:scaleX(0.85);transform-origin:left center;">Скидка руч., Σ:</div>
<div style="position:absolute;left:466px;top:418px;width:65px;height:19px;box-sizing:border-box;background:#fff;border:1px solid #b9b9b9;border-radius:3.5px;"></div>
<div class="t" style="right:285px;top:419px;font-size:8.2px;color:#4a4a4a;font-weight:400;transform:scaleX(0.86);transform-origin:right center;">519,05</div>
<svg style="position:absolute;left:517px;top:420px" width="11" height="14" viewBox="517 420 11 14" fill="none" stroke="#a8a8a8" stroke-width="0.9" stroke-linecap="round" stroke-linejoin="round"><rect x="520.6" y="424.5" width="5" height="6.8" rx="0.6" fill="#e4e4e4"/><path d="M523.1 425.6V430.2" stroke="#f4f4f4" stroke-width="0.8"/></svg>
<div class="t" style="left:545.75px;top:418px;font-size:8.4px;color:#5c5c5c;font-weight:400;transform:scaleX(0.85);transform-origin:left center;">НДС:</div>
<div style="position:absolute;left:566px;top:418px;width:84px;height:19px;box-sizing:border-box;background:#efefef;border:1px solid #dcdcdc;border-radius:3.5px;"></div>
<div class="t" style="right:154.39999999999998px;top:419px;font-size:8.2px;color:#5a5a5a;font-weight:400;transform:scaleX(0.86);transform-origin:right center;">5 557,77</div>
<div class="t" style="left:664.5px;top:418px;font-size:8.4px;color:#5c5c5c;font-weight:400;transform:scaleX(0.85);transform-origin:left center;">Всего:</div>
<div style="position:absolute;left:689px;top:418px;width:83px;height:19px;box-sizing:border-box;background:#fff;border:1px solid #b9b9b9;border-radius:3.5px;"></div>
<div class="t" style="right:44.200000000000045px;top:419px;font-size:8.2px;color:#4a4a4a;font-weight:400;transform:scaleX(0.86);transform-origin:right center;">33 346,55</div>
<svg style="position:absolute;left:757px;top:420px" width="11" height="14" viewBox="757 420 11 14" fill="none" stroke="#a8a8a8" stroke-width="0.9" stroke-linecap="round" stroke-linejoin="round"><rect x="761.4" y="424.5" width="5" height="6.8" rx="0.6" fill="#e4e4e4"/><path d="M763.9 425.6V430.2" stroke="#f4f4f4" stroke-width="0.8"/></svg>
<svg style="position:absolute;left:777px;top:418px" width="15" height="14" viewBox="777 418 15 14" fill="none" stroke="#8a8a8a" stroke-width="0.9" stroke-linecap="round" stroke-linejoin="round"><circle cx="784.4" cy="424.1" r="4.4"/><path d="M782.8 424.9L784.4 423.3L786 424.9"/></svg>
<div style="position:absolute;left:512px;top:448px;width:81px;height:19px;box-sizing:border-box;background:#ffdb00;border-radius:5px;"></div>
<div class="t" style="left:517.8px;top:449px;font-size:7.9px;color:#3a3000;font-weight:400;transform:scaleX(0.95);transform-origin:left center;">Провести и закрыть</div>
<div style="position:absolute;left:599px;top:448px;width:43px;height:19px;box-sizing:border-box;background:#dedede;border-radius:5px;"></div>
<div class="t" style="left:604.7px;top:449px;font-size:7.9px;color:#333;font-weight:400;transform:scaleX(0.94);transform-origin:left center;">Записать</div>
<div style="position:absolute;left:647px;top:449px;width:1px;height:18px;box-sizing:border-box;background:#e0e0e0;"></div>
<div style="position:absolute;left:653px;top:448px;width:44px;height:19px;box-sizing:border-box;background:#dedede;border-radius:5px;"></div>
<div class="t" style="left:659px;top:449px;font-size:7.9px;color:#1e1e1e;font-weight:400;transform:scaleX(0.94);transform-origin:left center;text-shadow:0.15px 0 0 rgba(0,0,0,0.6);">Провести</div>
<div style="position:absolute;left:703px;top:448px;width:88px;height:19px;box-sizing:border-box;background:#f1f1f1;border-radius:5px;"></div>
<div class="t" style="left:709px;top:449px;font-size:7.9px;color:#9c9c9c;font-weight:400;transform:scaleX(0.93);transform-origin:left center;">Отменить проведение</div>
</body></html>
